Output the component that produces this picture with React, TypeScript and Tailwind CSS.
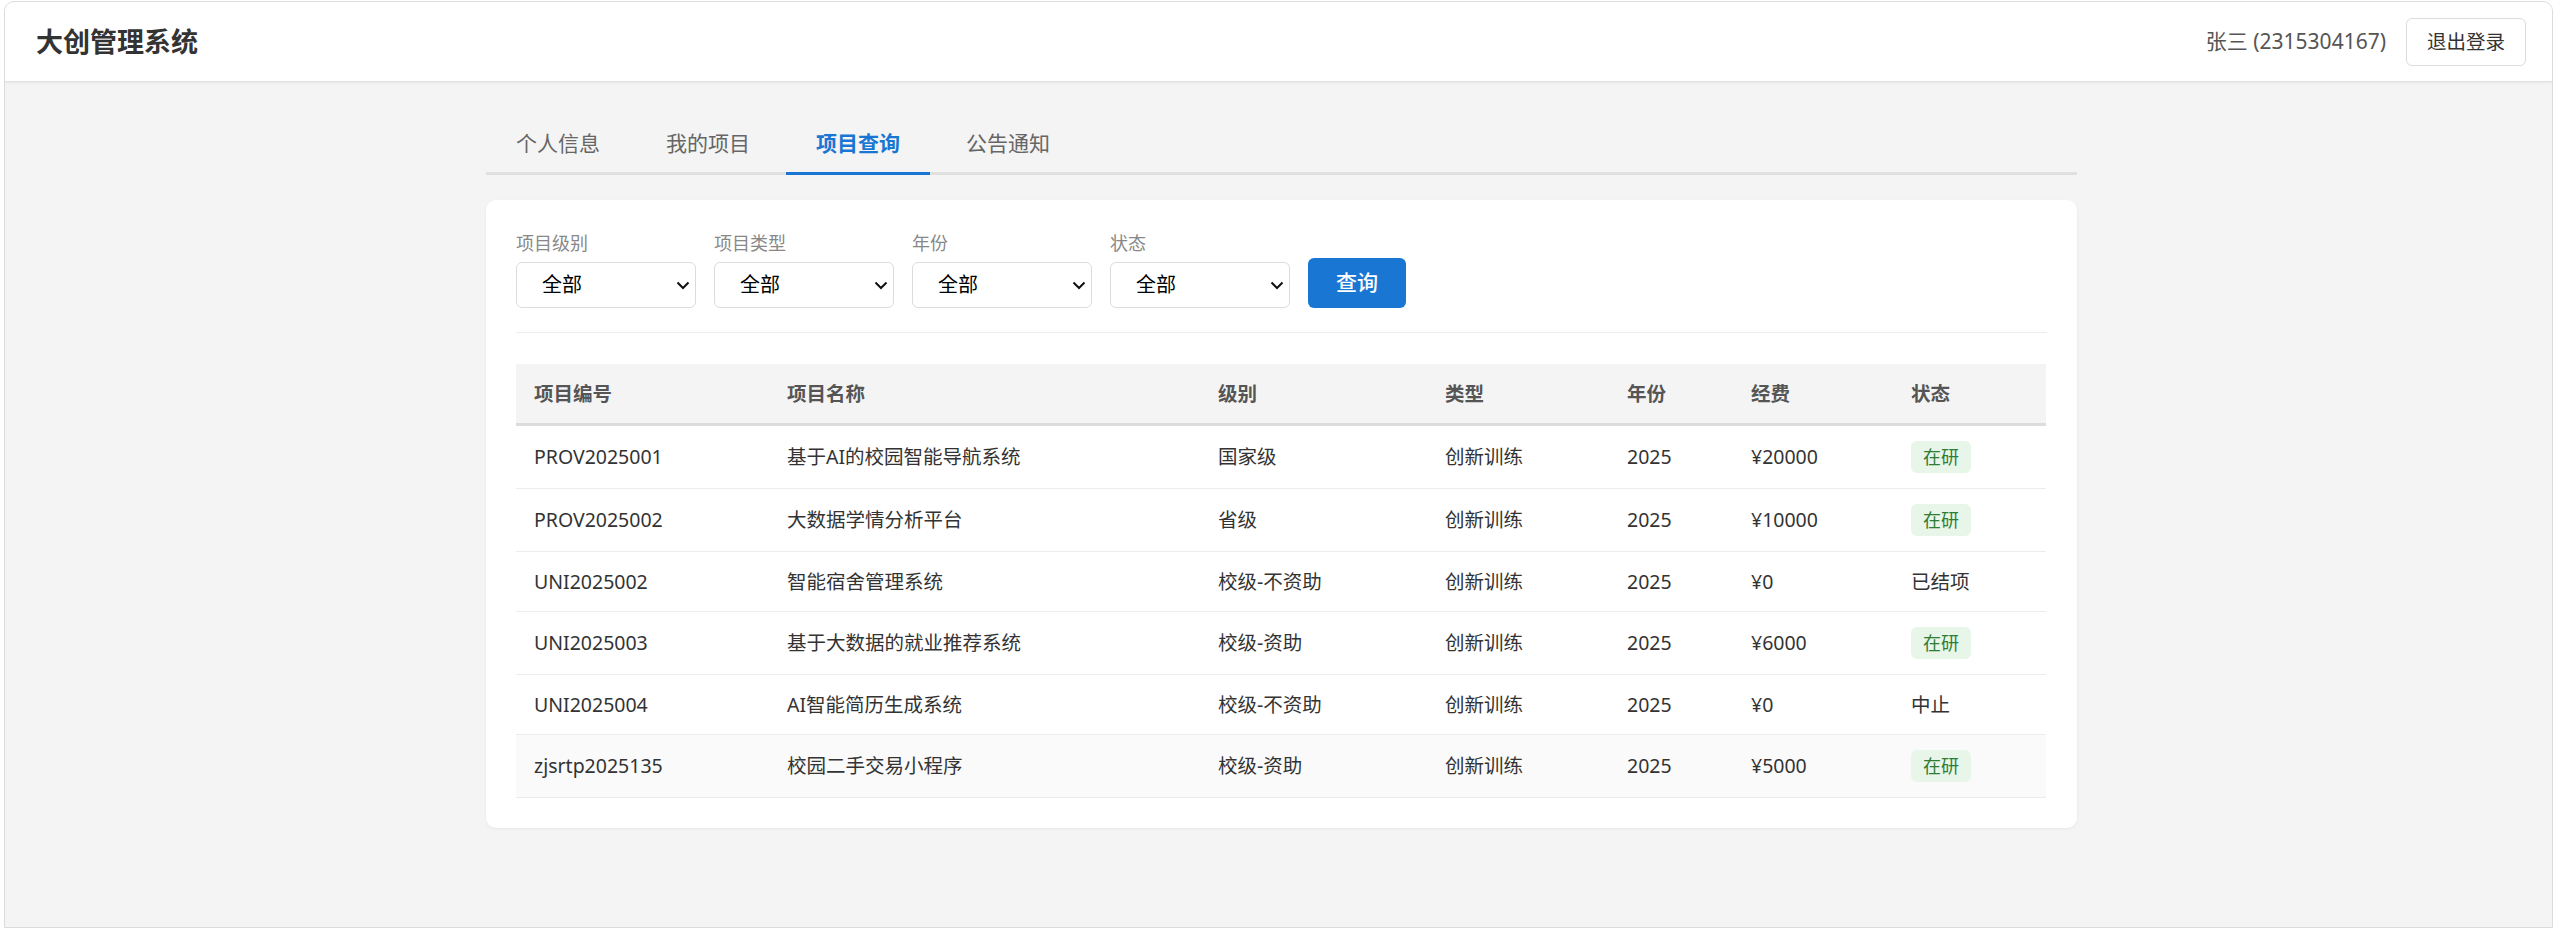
import React from "react";

const rows = [
  { code: "PROV2025001", name: "基于AI的校园智能导航系统", level: "国家级", type: "创新训练", year: "2025", fund: "¥20000", status: "在研" },
  { code: "PROV2025002", name: "大数据学情分析平台", level: "省级", type: "创新训练", year: "2025", fund: "¥10000", status: "在研" },
  { code: "UNI2025002", name: "智能宿舍管理系统", level: "校级-不资助", type: "创新训练", year: "2025", fund: "¥0", status: "已结项" },
  { code: "UNI2025003", name: "基于大数据的就业推荐系统", level: "校级-资助", type: "创新训练", year: "2025", fund: "¥6000", status: "在研" },
  { code: "UNI2025004", name: "AI智能简历生成系统", level: "校级-不资助", type: "创新训练", year: "2025", fund: "¥0", status: "中止" },
  { code: "zjsrtp2025135", name: "校园二手交易小程序", level: "校级-资助", type: "创新训练", year: "2025", fund: "¥5000", status: "在研" },
];

const filters = ["项目级别", "项目类型", "年份", "状态"];
const tabs = ["个人信息", "我的项目", "项目查询", "公告通知"];
const headers = ["项目编号", "项目名称", "级别", "类型", "年份", "经费", "状态"];
const colWidths = ["w-[253px]", "w-[431px]", "w-[227px]", "w-[182px]", "w-[124px]", "w-[160px]", "w-[153px]"];

function Select() {
  return (
    <div className="relative w-[180px] h-[46px]">
      <select className="appearance-none w-full h-full rounded-[6px] border border-[#dcdcdc] bg-white pl-[25px] text-[20px] text-black outline-none">
        <option>全部</option>
      </select>
      <svg className="pointer-events-none absolute right-[6px] top-[19px]" width="14" height="9" viewBox="0 0 14 9" fill="none">
        <path d="M1.5 1.5L7 7L12.5 1.5" stroke="#111" strokeWidth="2" />
      </svg>
    </div>
  );
}

export default function App() {
  return (
    <div
      className="h-[928px] bg-white pt-[1px] pl-[4px] pr-[4px] overflow-hidden"
      style={{ fontFamily: '"Noto Sans", "Noto Sans CJK SC", sans-serif' }}
    >
      <div className="h-full rounded-t-[10px] border border-[#dcdcdc] bg-[#f4f4f4] overflow-hidden">
        <header className="h-[80px] bg-white border-b border-[#e0e0e0] shadow-[0_1px_3px_rgba(0,0,0,0.05)] flex items-center justify-between pl-[31px] pr-[26px]">
          <h1 className="text-[27px] font-bold text-[#333] leading-none">大创管理系统</h1>
          <div className="flex items-center gap-[20px]">
            <span className="text-[21px] text-[#555]">张三 (2315304167)</span>
            <button className="h-[48px] px-[20px] rounded-[6px] border border-[#dcdcdc] bg-white text-[19.5px] text-[#333]">
              退出登录
            </button>
          </div>
        </header>

        <main className="pt-[31px] pl-[6px]">
          <div className="mx-auto w-[1591px]">
            <nav className="flex gap-[6px] border-b-[3px] border-[#e0e0e0]">
              {tabs.map((t, i) => (
                <div
                  key={t}
                  className={
                    i === 2
                      ? "w-[144px] pt-[15px] pb-[13px] -mb-[3px] border-b-[3px] border-[#1976d2] text-center text-[21px] leading-[31px] font-bold text-[#1976d2]"
                      : "w-[144px] pt-[15px] pb-[13px] text-center text-[21px] leading-[31px] text-[#666]"
                  }
                >
                  {t}
                </div>
              ))}
            </nav>

            <section className="mt-[25px] rounded-[10px] bg-white p-[30px] shadow-[0_1px_3px_rgba(0,0,0,0.06)]">
              <div className="flex items-end gap-[18px] pb-[24px] border-b border-[#ececec]">
                {filters.map((f) => (
                  <div key={f} className="flex flex-col">
                    <label className="text-[18px] leading-[27px] text-[#888] mb-[5px]">{f}</label>
                    <Select />
                  </div>
                ))}
                <button className="h-[50px] w-[98px] rounded-[6px] bg-[#1976d2] text-[21px] font-medium text-white">
                  查询
                </button>
              </div>

              <table className="mt-[31px] w-[1530px] border-collapse table-fixed">
                <colgroup>
                  {colWidths.map((w, i) => (
                    <col key={i} className={w} />
                  ))}
                </colgroup>
                <thead>
                  <tr className="bg-[#f4f4f4] border-b-[3px] border-[#dcdcdc]">
                    {headers.map((h) => (
                      <th key={h} className="h-[60px] pl-[18px] text-left text-[19.5px] font-bold text-[#555]">
                        {h}
                      </th>
                    ))}
                  </tr>
                </thead>
                <tbody>
                  {rows.map((r, i) => (
                    <tr key={r.code} className={`border-b border-[#ececec] ${i === rows.length - 1 ? "bg-[#fafafa]" : ""}`}>
                      {[r.code, r.name, r.level, r.type, r.year, r.fund].map((c, j) => (
                        <td key={j} className="pl-[18px] py-[15px] text-[19.5px] leading-[29px] text-[#333] align-middle">
                          {c}
                        </td>
                      ))}
                      <td className="pl-[18px] py-[15px] text-[19.5px] leading-[29px] text-[#333] align-middle">
                        {r.status === "在研" ? (
                          <span className="inline-block align-top rounded-[6px] bg-[#e8f5e9] px-[12px] text-[18px] leading-[32px] text-[#2e7d32]">
                            在研
                          </span>
                        ) : (
                          r.status
                        )}
                      </td>
                    </tr>
                  ))}
                </tbody>
              </table>
            </section>
          </div>
        </main>
      </div>
    </div>
  );
}
